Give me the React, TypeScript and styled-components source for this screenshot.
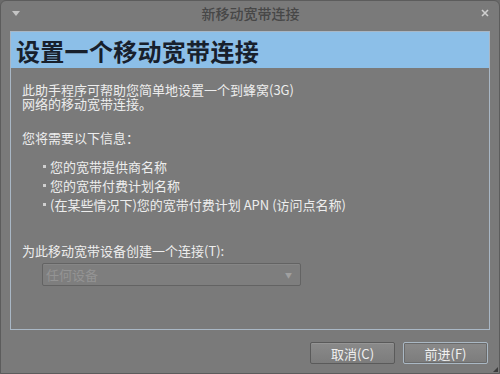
import React from 'react';
import styled, { createGlobalStyle } from 'styled-components';

const GlobalStyle = createGlobalStyle`
    html, body {
        margin: 0;
        padding: 0;
        background: #6a6a6a;
    }
    body {
        font-family: "Noto Sans CJK SC", "Noto Sans", "DejaVu Sans", sans-serif;
    }
`;

const Window = styled.div`
    width: 500px;
    height: 374px;
    box-sizing: border-box;
    display: flex;
    flex-direction: column;
    background: #7a7a7a;
    border: 1px solid #5c5c5c;
    border-radius: 6px 6px 0 0;
    position: relative;
    overflow: hidden;
`;

const TitleBar = styled.div`
    height: 24px;
    display: flex;
    align-items: center;
    padding: 0 9px 0 10px;
    margin-bottom: 6px;
`;

const TitleText = styled.div`
    flex: 1;
    text-align: center;
    font-size: 14px;
    font-weight: 500;
    color: #474747;
`;

const TitleIcon = styled.div`
    width: 10px;
    display: flex;
    align-items: center;
    justify-content: center;
`;

const Panel = styled.div`
    margin: 0 9px;
    height: 299px;
    box-sizing: border-box;
    border: 1px solid #a9b7c5;
    display: flex;
    flex-direction: column;
`;

const Banner = styled.div`
    height: 36px;
    background: #8cbfe8;
    display: flex;
    align-items: center;
    padding-left: 5px;
    font-size: 24px;
    font-weight: 700;
    color: #18202c;
    letter-spacing: 0.3px;
`;

const Content = styled.div`
    padding: 15px 11px 0 11px;
    color: #ededed;
    font-size: 13px;
    line-height: 14px;
`;

const Para = styled.p<{ $top?: number }>`
    margin: ${p => p.$top ?? 0}px 0 0 0;
`;

const BulletList = styled.ul`
    list-style: none;
    margin: 12px 0 0 0;
    padding: 0 0 0 21px;
`;

const Bullet = styled.li`
    height: 19px;
    display: flex;
    align-items: center;
    &::before {
        content: '';
        width: 3px;
        height: 3px;
        background: #cfcfcf;
        margin-right: 4px;
    }
`;

const Combo = styled.div`
    margin: 5px 0 0 20px;
    width: 259px;
    height: 23px;
    box-sizing: border-box;
    border: 1px solid #636363;
    border-radius: 2px;
    background: #7e7e7e;
    box-shadow: inset 0 1px 0 #868686;
    display: flex;
    align-items: center;
    justify-content: space-between;
    padding: 0 8px 0 3px;
    color: #949494;
    font-size: 13px;
`;

const Arrow = styled.span`
    font-size: 7px;
    color: #a0a0a0;
`;

const Footer = styled.div`
    flex: 1;
    display: flex;
    justify-content: flex-end;
    align-items: flex-start;
    gap: 8px;
    padding: 12px 11px 0 0;
`;

const Button = styled.button<{ $default?: boolean }>`
    width: 85px;
    height: 22px;
    box-sizing: border-box;
    border: 1px solid ${p => (p.$default ? '#aab8c4' : '#5a5a5a')};
    border-radius: 2px;
    background: linear-gradient(#8a8a8a, #7c7c7c);
    box-shadow: ${p => (p.$default ? 'inset 0 0 0 1px #6a6a6a' : 'inset 0 1px 0 #959595')};
    color: #f0f0f0;
    font-family: inherit;
    font-size: 13px;
    padding: 0;
    display: flex;
    align-items: center;
    justify-content: center;
`;

const Grip = styled.div`
    position: absolute;
    right: 1px;
    bottom: 1px;
    width: 0;
    height: 0;
    border-left: 5px solid transparent;
    border-bottom: 5px solid #3c3c3c;
`;

const App: React.FunctionComponent = () => (
    <>
        <GlobalStyle />
        <Window>
            <TitleBar>
                <TitleIcon>
                    <svg width="8" height="5" viewBox="0 0 8 5">
                        <path d="M0 0 L8 0 L4 5 Z" fill="#c4c4c4" />
                    </svg>
                </TitleIcon>
                <TitleText>新移动宽带连接</TitleText>
                <TitleIcon>
                    <svg width="8" height="8" viewBox="0 0 8 8">
                        <path d="M1 1 L7 7 M7 1 L1 7" stroke="#cfcfcf" strokeWidth="1.6" />
                    </svg>
                </TitleIcon>
            </TitleBar>
            <Panel>
                <Banner>设置一个移动宽带连接</Banner>
                <Content>
                    <Para>
                        此助手程序可帮助您简单地设置一个到蜂窝(3G)
                        <br />
                        网络的移动宽带连接。
                    </Para>
                    <Para $top={20}>您将需要以下信息：</Para>
                    <BulletList>
                        <Bullet>您的宽带提供商名称</Bullet>
                        <Bullet>您的宽带付费计划名称</Bullet>
                        <Bullet>(在某些情况下)您的宽带付费计划 APN (访问点名称)</Bullet>
                    </BulletList>
                    <Para $top={30}>为此移动宽带设备创建一个连接(T):</Para>
                    <Combo>
                        <span>任何设备</span>
                        <Arrow>▼</Arrow>
                    </Combo>
                </Content>
            </Panel>
            <Footer>
                <Button>取消(C)</Button>
                <Button $default>前进(F)</Button>
            </Footer>
            <Grip />
        </Window>
    </>
);

export default App;
